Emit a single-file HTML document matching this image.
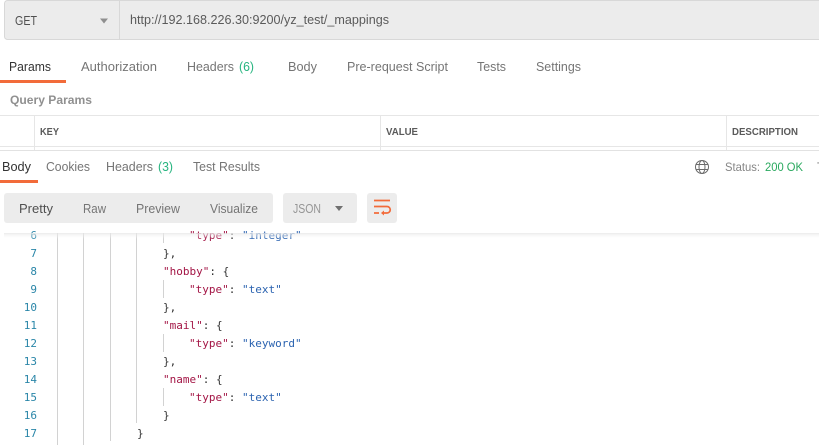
<!DOCTYPE html>
<html><head><meta charset="utf-8">
<style>
html,body{margin:0;padding:0;background:#fff}
body{width:819px;height:445px;overflow:hidden;position:relative}
svg{position:absolute;left:0;top:0}
text{font-family:"Liberation Sans",sans-serif;font-size:13px;fill:#757575}
.d{fill:#333}
.g{fill:#26b47f}
.h{font-size:10.5px;font-weight:bold;fill:#5a5a5a}
.c{font-family:"DejaVu Sans Mono","Liberation Mono",monospace;font-size:11px;fill:#333}
.n{fill:#2a86a8;text-anchor:end}
.k{fill:#a31545}
.s{fill:#2b63b0}
</style></head><body>
<svg width="819" height="445" viewBox="0 0 819 445" xmlns="http://www.w3.org/2000/svg">
<!-- URL bar -->
<rect x="4.500" y="0.500" width="830" height="39" rx="3" fill="#ececec" stroke="#d8d8d8"/>
<rect x="119" y="1" width="1" height="38" fill="#d8d8d8"/>
<text x="15" y="25" textLength="22" lengthAdjust="spacingAndGlyphs" style="font-size:12.500px;fill:#505050">GET</text>
<path d="M100 18.500h8l-4 5z" fill="#8f8f8f"/>
<text x="130" y="24" textLength="259" lengthAdjust="spacingAndGlyphs" style="fill:#5a5a5a">http://192.168.226.30:9200/yz_test/_mappings</text>

<!-- Request tabs -->
<text x="9" y="71" textLength="42" lengthAdjust="spacingAndGlyphs" class="d">Params</text>
<rect x="0" y="80" width="66" height="3" fill="#f26b3a"/>
<text x="81" y="71" textLength="76" lengthAdjust="spacingAndGlyphs">Authorization</text>
<text x="187" y="71" textLength="47" lengthAdjust="spacingAndGlyphs">Headers</text>
<text x="239" y="71" textLength="15" lengthAdjust="spacingAndGlyphs" class="g">(6)</text>
<text x="288" y="71" textLength="29" lengthAdjust="spacingAndGlyphs">Body</text>
<text x="347" y="71" textLength="101" lengthAdjust="spacingAndGlyphs">Pre-request Script</text>
<text x="477" y="71" textLength="29" lengthAdjust="spacingAndGlyphs">Tests</text>
<text x="536" y="71" textLength="45" lengthAdjust="spacingAndGlyphs">Settings</text>
<text x="10" y="104" textLength="82" lengthAdjust="spacingAndGlyphs" style="font-weight:bold;font-size:12px;fill:#909090">Query Params</text>

<!-- Params table -->
<rect x="0" y="115" width="819" height="1" fill="#e6e6e6"/>
<rect x="0" y="146" width="819" height="1" fill="#e6e6e6"/>
<rect x="34" y="116" width="1" height="34" fill="#e6e6e6"/>
<rect x="380" y="116" width="1" height="34" fill="#e6e6e6"/>
<rect x="726" y="116" width="1" height="34" fill="#e6e6e6"/>
<text x="40" y="135" textLength="19" lengthAdjust="spacingAndGlyphs" class="h">KEY</text>
<text x="386" y="135" textLength="32" lengthAdjust="spacingAndGlyphs" class="h">VALUE</text>
<text x="732" y="135" textLength="66" lengthAdjust="spacingAndGlyphs" class="h">DESCRIPTION</text>
<rect x="0" y="150" width="819" height="1" fill="#e2e2e2"/>

<!-- Response tabs -->
<text x="2" y="171" textLength="29" lengthAdjust="spacingAndGlyphs" class="d">Body</text>
<rect x="0" y="180" width="38" height="3" fill="#f26b3a"/>
<text x="46" y="171" textLength="44" lengthAdjust="spacingAndGlyphs">Cookies</text>
<text x="106" y="171" textLength="47" lengthAdjust="spacingAndGlyphs">Headers</text>
<text x="158" y="171" textLength="15" lengthAdjust="spacingAndGlyphs" class="g">(3)</text>
<text x="193" y="171" textLength="67" lengthAdjust="spacingAndGlyphs">Test Results</text>

<!-- Globe -->
<g fill="none" stroke="#6b6b6b" stroke-width="1">
<circle cx="702" cy="167" r="6.500"/>
<ellipse cx="702" cy="167" rx="3" ry="6.500"/>
<path d="M696 164.500h12M696 169.500h12"/>
</g>
<text x="725" y="171" textLength="35" lengthAdjust="spacingAndGlyphs" style="font-size:12px;fill:#858585">Status:</text>
<text x="765" y="171" textLength="38" lengthAdjust="spacingAndGlyphs" style="font-size:12px;fill:#2aa95f">200 OK</text>
<text x="817" y="171" style="font-size:12px">T</text>

<!-- Toolbar -->
<rect x="4" y="193" width="269" height="30" rx="3" fill="#ececec"/>
<text x="19" y="213" textLength="34" lengthAdjust="spacingAndGlyphs" style="fill:#505050">Pretty</text>
<text x="83" y="213" textLength="23" lengthAdjust="spacingAndGlyphs">Raw</text>
<text x="136" y="213" textLength="44" lengthAdjust="spacingAndGlyphs">Preview</text>
<text x="210" y="213" textLength="48" lengthAdjust="spacingAndGlyphs">Visualize</text>
<rect x="283" y="193" width="74" height="30" rx="3" fill="#ececec"/>
<text x="293" y="213" textLength="28" lengthAdjust="spacingAndGlyphs" style="font-size:12.500px;fill:#959595">JSON</text>
<path d="M335 206h8l-4 5z" fill="#707070"/>
<rect x="367" y="193" width="30" height="30" rx="3" fill="#ececec"/>
<g fill="none" stroke="#f26b3a" stroke-width="1.700">
<path d="M374 200.500h16M374 206.500h13a3 3 0 0 1 0 6.500h-4M374 213h5"/>
</g>
<path d="M384 210.500v5l-3-2.500z" fill="#f26b3a"/>

<!-- Code text -->
<text x="37" y="239" class="c n">6</text>
<text x="37" y="257" class="c n">7</text>
<text x="37" y="275" class="c n">8</text>
<text x="37" y="293" class="c n">9</text>
<text x="37" y="311" class="c n">10</text>
<text x="37" y="329" class="c n">11</text>
<text x="37" y="347" class="c n">12</text>
<text x="37" y="365" class="c n">13</text>
<text x="37" y="383" class="c n">14</text>
<text x="37" y="401" class="c n">15</text>
<text x="37" y="419" class="c n">16</text>
<text x="37" y="437" class="c n">17</text>

<g fill="#d2d2d2">
<rect x="57" y="233" width="1" height="212"/>
<rect x="83" y="233" width="1" height="212"/>
<rect x="110" y="233" width="1" height="208"/>
<rect x="136" y="233" width="1" height="190"/>
<rect x="163" y="233" width="1" height="10"/>
<rect x="163" y="280" width="1" height="18"/>
<rect x="163" y="334" width="1" height="18"/>
<rect x="163" y="388" width="1" height="18"/>
</g>

<text x="189" y="239" class="c"><tspan class="k">"type"</tspan>: <tspan class="s">"integer"</tspan></text>
<text x="163" y="257" class="c">},</text>
<text x="163" y="275" class="c"><tspan class="k">"hobby"</tspan>: {</text>
<text x="189" y="293" class="c"><tspan class="k">"type"</tspan>: <tspan class="s">"text"</tspan></text>
<text x="163" y="311" class="c">},</text>
<text x="163" y="329" class="c"><tspan class="k">"mail"</tspan>: {</text>
<text x="189" y="347" class="c"><tspan class="k">"type"</tspan>: <tspan class="s">"keyword"</tspan></text>
<text x="163" y="365" class="c">},</text>
<text x="163" y="383" class="c"><tspan class="k">"name"</tspan>: {</text>
<text x="189" y="401" class="c"><tspan class="k">"type"</tspan>: <tspan class="s">"text"</tspan></text>
<text x="163" y="419" class="c">}</text>
<text x="137" y="437" class="c">}</text>

<!-- Top fade over code -->
<defs><linearGradient id="f" x1="0" y1="0" x2="0" y2="1"><stop offset="0" stop-color="#e6e6e6" stop-opacity=".8"/><stop offset="1" stop-color="#fff" stop-opacity="0"/></linearGradient></defs>
<rect x="4" y="233" width="815" height="6" fill="url(#f)"/>
</svg>
</body></html>
